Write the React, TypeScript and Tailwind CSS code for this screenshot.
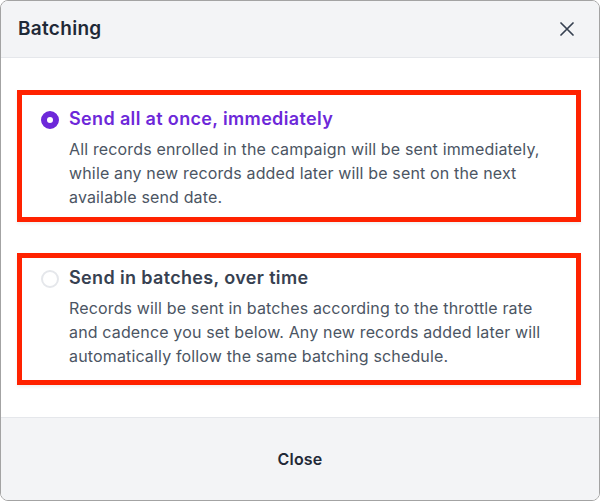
import { useState } from "react";

type Option = {
  id: string;
  title: string;
  body: string;
  pad: string;
};

const options: Option[] = [
  {
    id: "all",
    title: "Send all at once, immediately",
    body: "All records enrolled in the campaign will be sent immediately, while any new records added later will be sent on the next available send date.",
    pad: "pt-[10px] pb-[8px]",
  },
  {
    id: "batches",
    title: "Send in batches, over time",
    body: "Records will be sent in batches according to the throttle rate and cadence you set below. Any new records added later will automatically follow the same batching schedule.",
    pad: "pt-[6px] pb-[12px]",
  },
];

function Radio({ checked }: { checked: boolean }) {
  return checked ? (
    <span className="mt-[6px] block h-[18px] w-[18px] shrink-0 rounded-full border-[6px] border-[#6d28d9] bg-white" />
  ) : (
    <span className="mt-[6px] block h-[18px] w-[18px] shrink-0 rounded-full border-2 border-[#e5e7eb] bg-white" />
  );
}

export default function App() {
  const [selected, setSelected] = useState("all");

  return (
    <div
      className="flex h-[501px] w-[600px] flex-col overflow-hidden rounded-lg border border-[#a3a3a3] bg-white"
      style={{ fontFamily: "Inter, 'Noto Sans', sans-serif" }}
    >
      {/* header */}
      <div className="flex h-[57px] shrink-0 items-center justify-between border-b border-[#e5e7eb] bg-[#f3f4f6] pl-[17px] pr-[25px]">
        <h2 className="text-[19px] font-semibold tracking-[0.3px] text-[#1f2937]">Batching</h2>
        <button type="button" className="text-[#374151]">
          <svg width="14" height="14" viewBox="0 0 14 14" fill="none" stroke="currentColor" strokeWidth="1.7" strokeLinecap="round">
            <path d="M1 1L13 13M13 1L1 13" />
          </svg>
        </button>
      </div>

      {/* body */}
      <div className="flex flex-1 flex-col gap-[31px] px-[16px] pt-[32px]">
        {options.map((opt) => {
          const active = selected === opt.id;
          return (
            <button
              key={opt.id}
              type="button"
              onClick={() => setSelected(opt.id)}
              className={`flex w-[564px] gap-[10px] border-[5px] border-[#ff2200] bg-white pl-[19px] pr-[28px] text-left shadow-[0_2px_3px_rgba(0,0,0,0.06)] ${opt.pad}`}
            >
              <Radio checked={active} />
              <div>
                <div
                  className={`text-[18px] font-semibold leading-[28px] tracking-[0.35px] ${active ? "text-[#6d28d9]" : "text-[#374151]"}`}
                >
                  {opt.title}
                </div>
                <p className="mt-[4px] text-[16px] leading-[24px] tracking-[0.15px] text-[#4b5563]">{opt.body}</p>
              </div>
            </button>
          );
        })}
      </div>

      {/* footer */}
      <div className="flex h-[83px] shrink-0 items-center justify-center border-t border-[#e5e7eb] bg-[#f3f4f6]">
        <button type="button" className="text-[16px] font-semibold tracking-[0.2px] text-[#1f2937]">
          Close
        </button>
      </div>
    </div>
  );
}
